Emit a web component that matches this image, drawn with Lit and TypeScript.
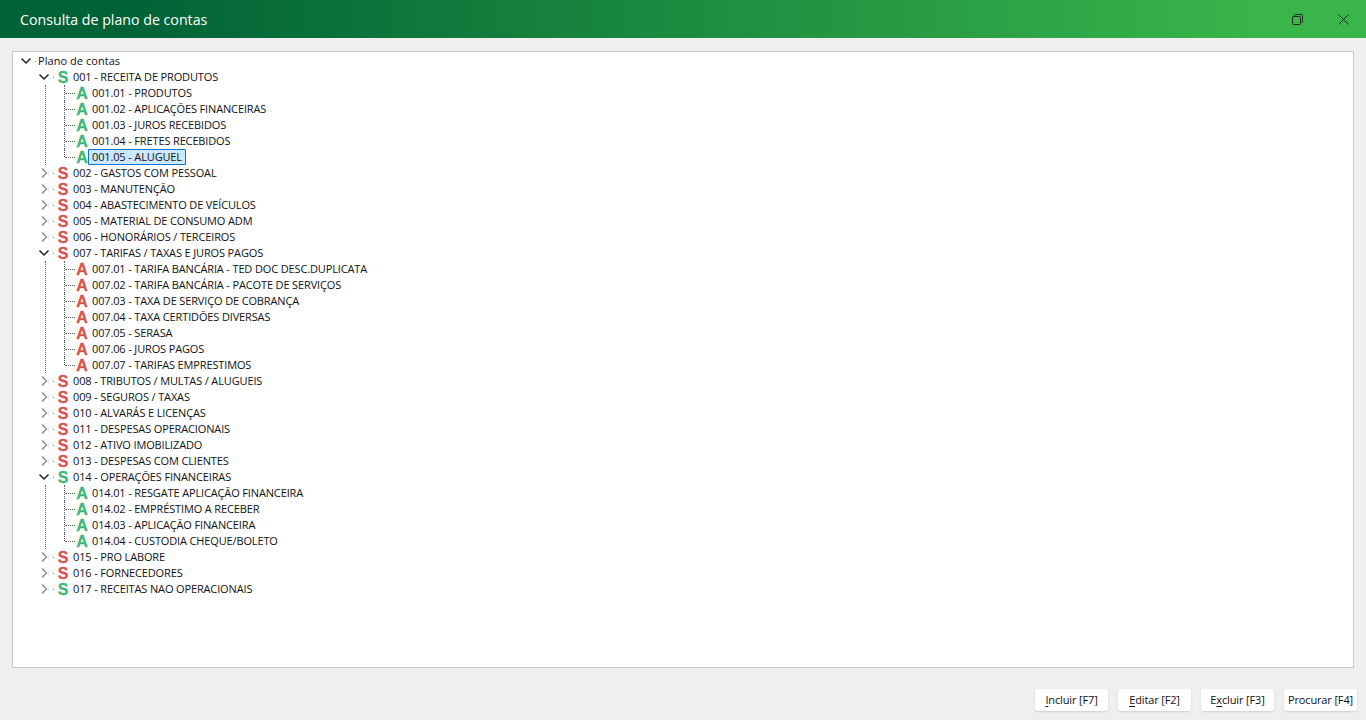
import { LitElement, html, css, svg, nothing } from "lit";
import { customElement } from "lit/decorators.js";

const GREEN = "#3dba77";
const RED = "#d9534f";

interface Node { label: string; red: boolean; kids?: string[]; }

const nodes: Node[] = [
  { label: "001 - RECEITA DE PRODUTOS", red: false, kids: ["001.01 - PRODUTOS", "001.02 - APLICAÇÕES FINANCEIRAS", "001.03 - JUROS RECEBIDOS", "001.04 - FRETES RECEBIDOS", "001.05 - ALUGUEL"] },
  { label: "002 - GASTOS COM PESSOAL", red: true },
  { label: "003 - MANUTENÇÃO", red: true },
  { label: "004 - ABASTECIMENTO DE VEÍCULOS", red: true },
  { label: "005 - MATERIAL DE CONSUMO ADM", red: true },
  { label: "006 - HONORÁRIOS / TERCEIROS", red: true },
  { label: "007 - TARIFAS / TAXAS E JUROS PAGOS", red: true, kids: ["007.01 - TARIFA BANCÁRIA - TED DOC DESC.DUPLICATA", "007.02 - TARIFA BANCÁRIA - PACOTE DE SERVIÇOS", "007.03 - TAXA DE SERVIÇO DE COBRANÇA", "007.04 - TAXA CERTIDÕES DIVERSAS", "007.05 - SERASA", "007.06 - JUROS PAGOS", "007.07 - TARIFAS EMPRESTIMOS"] },
  { label: "008 - TRIBUTOS / MULTAS / ALUGUEIS", red: true },
  { label: "009 - SEGUROS / TAXAS", red: true },
  { label: "010 - ALVARÁS E LICENÇAS", red: true },
  { label: "011 - DESPESAS OPERACIONAIS", red: true },
  { label: "012 - ATIVO IMOBILIZADO", red: true },
  { label: "013 - DESPESAS COM CLIENTES", red: true },
  { label: "014 - OPERAÇÕES FINANCEIRAS", red: false, kids: ["014.01 - RESGATE APLICAÇÃO FINANCEIRA", "014.02 - EMPRÉSTIMO A RECEBER", "014.03 - APLICAÇÃO FINANCEIRA", "014.04 - CUSTODIA CHEQUE/BOLETO"] },
  { label: "015 - PRO LABORE", red: true },
  { label: "016 - FORNECEDORES", red: true },
  { label: "017 - RECEITAS NAO OPERACIONAIS", red: false },
];

const chevDown = svg`<svg class="chev" width="12" height="8" viewBox="0 0 12 8"><path d="M1.5 1.5 6 6l4.5-4.5" fill="none" stroke="#222" stroke-width="1.5"/></svg>`;
const chevRight = svg`<svg class="chev" width="12" height="12" viewBox="0 0 12 12"><path d="M4 1.5 8.5 6 4 10.5" fill="none" stroke="#8f8f8f" stroke-width="1.5"/></svg>`;

@customElement("app-root")
export class AppRoot extends LitElement {
  static styles = css`
    :host { display: flex; flex-direction: column; height: 720px; width: 1366px; background: #efefef; font-family: "Open Sans", sans-serif; color: #111; overflow: hidden; }
    .title { height: 38px; flex: none; display: flex; align-items: center; padding: 0 17px 0 20px; background: linear-gradient(90deg, #006236 9%, #39b54a 92%); color: #fff; font-size: 14.2px; }
    .title span { flex: 1; }
    .win { display: flex; align-items: center; gap: 35px; }
    .win svg { display: block; }
    .tree { flex: none; margin: 13px 12px 0; height: 617px; box-sizing: border-box; border: 1px solid #c8c8c8; background: #fff; padding-top: 1px; font-size: 11px; letter-spacing: -0.14px; line-height: 16px; white-space: nowrap; }
    .row { display: flex; align-items: center; height: 16px; }
    .tw { width: 14px; flex: none; display: flex; justify-content: center; align-items: center; }
    .chev { display: block; }
    .dot { width: 1px; height: 1px; background: #888; margin-left: 2px; flex: none; }
    .root { padding-left: 6px; }
    .root .lbl { padding-left: 2px; margin-left: 0; letter-spacing: 0.05px; }
    .lvl1 { padding-left: 24px; }
    .ic { display: block; width: 14px; height: 16px; flex: none; font-family: "Liberation Sans", sans-serif; font-weight: 700; font-size: 16px; letter-spacing: 0; }
    .ic text { stroke-width: 0.3px; }
    .lvl1 .ic { margin-right: 3px; margin-left: 2px; }
    .kids { margin-left: 32px; border-left: 1px dotted #666; }
    .leaf { padding-left: 18px; }
    .branch { position: relative; width: 11px; height: 16px; flex: none; }
    .branch::before { content: ""; position: absolute; left: 0; top: 0; bottom: 0; border-left: 1px dotted #666; }
    .branch.last::before { bottom: 8px; }
    .branch::after { content: ""; position: absolute; left: 1px; right: 0; top: 8px; border-top: 1px dotted #666; }
    .lbl { padding: 0 4px; margin-left: -1px; height: 16px; box-sizing: border-box; display: block; }
    .lbl.sel { background: #cce8ff; border: 1px solid #0078d7; padding: 0 3px; line-height: 14px; border-radius: 1px; }
    .foot { flex: 1; display: flex; justify-content: flex-end; align-items: flex-start; gap: 10px; padding: 21px 9px 0 0; }
    button { all: unset; width: 73px; height: 22px; box-sizing: border-box; background: #fff; border-radius: 3px; box-shadow: 0 1px 2px rgba(0,0,0,.14); font-size: 11px; letter-spacing: -0.14px; line-height: 22px; text-align: center; color: #111; font-family: "Open Sans", sans-serif; }
    u { text-underline-offset: 2px; }
  `;

  private icon(ch: string, red: boolean) {
    const c = red ? RED : GREEN;
    return html`<svg class="ic" viewBox="0 0 14 16"><text x="7" y="14" text-anchor="middle" fill="${c}" stroke="${c}">${ch}</text></svg>`;
  }

  render() {
    return html`
      <div class="title">
        <span>Consulta de plano de contas</span>
        <div class="win">
          <svg width="11" height="11" viewBox="0 0 11 11" fill="none" stroke="#222" stroke-width="1"><rect x=".5" y="2.5" width="8" height="8" rx="1"/><path d="M2.5 2.5v-1a1 1 0 0 1 1-1h6a1 1 0 0 1 1 1v6a1 1 0 0 1-1 1h-1"/></svg>
          <svg width="11" height="11" viewBox="0 0 11 11" fill="none" stroke="#222" stroke-width="1"><path d="M.5.5l10 10M10.5.5l-10 10"/></svg>
        </div>
      </div>
      <div class="tree">
        <div class="row root"><span class="tw">${chevDown}</span><span class="dot"></span><span class="lbl">Plano de contas</span></div>
        ${nodes.map((n) => html`
          <div class="row lvl1">
            <span class="tw">${n.kids ? chevDown : chevRight}</span><span class="dot"></span>
            ${this.icon("S", n.red)}<span class="name">${n.label}</span>
          </div>
          ${n.kids ? html`<div class="kids">
            ${n.kids.map((k, i) => html`
              <div class="row leaf">
                <span class="branch ${i === n.kids!.length - 1 ? "last" : ""}"></span>
                ${this.icon("A", n.red)}
                <span class="lbl ${k === "001.05 - ALUGUEL" ? "sel" : ""}">${k}</span>
              </div>`)}
          </div>` : nothing}
        `)}
      </div>
      <div class="foot">
        <button><u>I</u>ncluir [F7]</button>
        <button><u>E</u>ditar [F2]</button>
        <button>E<u>x</u>cluir [F3]</button>
        <button>Procurar [F4]</button>
      </div>
    `;
  }
}
